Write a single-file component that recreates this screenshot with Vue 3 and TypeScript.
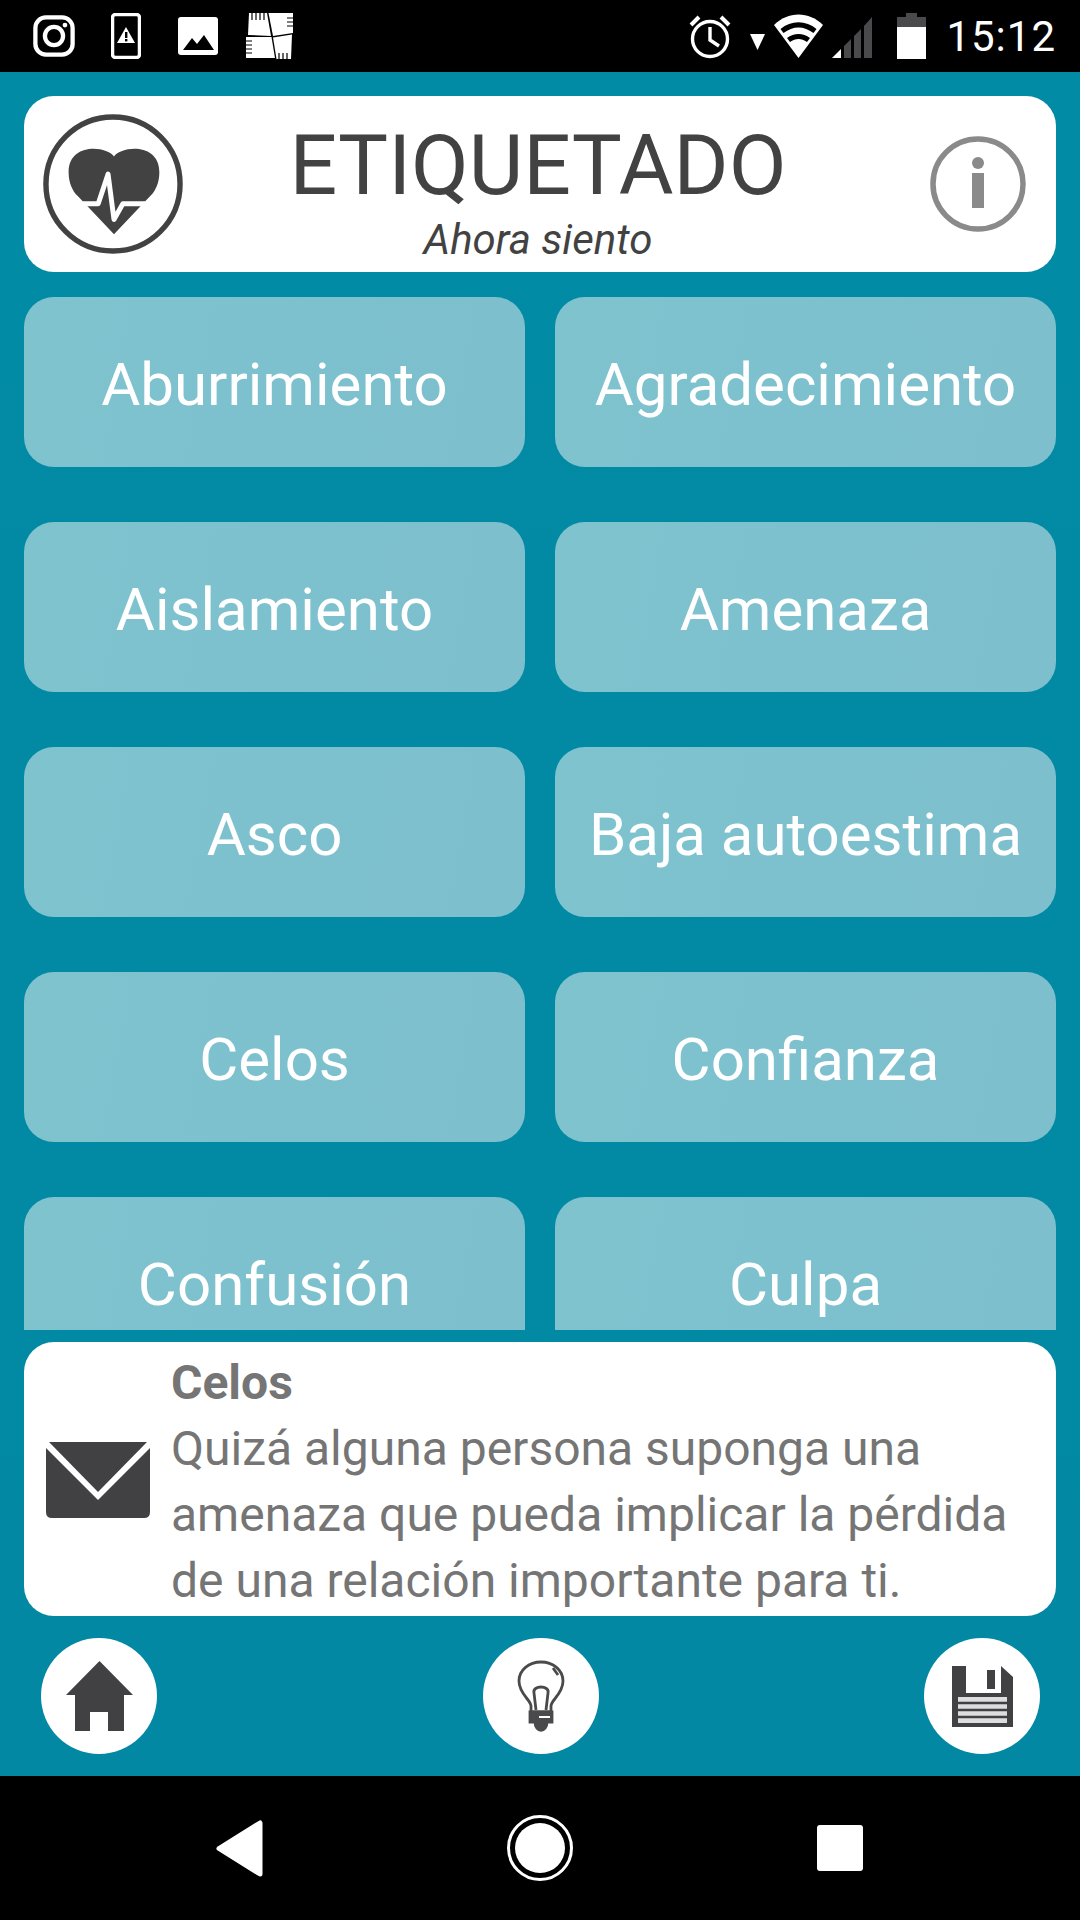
<script setup lang="ts">
const emotions: string[] = [
  'Aburrimiento',
  'Agradecimiento',
  'Aislamiento',
  'Amenaza',
  'Asco',
  'Baja autoestima',
  'Celos',
  'Confianza',
  'Confusión',
  'Culpa',
];
</script>

<template>
  <div class="screen">
    <div class="status-bar">
      <div class="status-left">
        <svg class="st-insta" viewBox="0 0 44 44" fill="none" stroke="#fff" stroke-width="4.5">
          <rect x="2.5" y="2.5" width="39" height="39" rx="11" />
          <circle cx="22" cy="22" r="9.5" />
          <circle cx="33.5" cy="10.5" r="2.5" fill="#fff" stroke="none" />
        </svg>
        <svg class="st-phone" viewBox="0 0 30 46">
          <rect x="1.5" y="1.500" width="27" height="43" rx="3" fill="none" stroke="#fff" stroke-width="3.500" />
          <path d="M15 14 L24 30 H6 Z" fill="#fff" />
          <rect x="14" y="19" width="2.400" height="6" fill="#000" />
          <rect x="14" y="26" width="2.400" height="2.400" fill="#000" />
        </svg>
        <svg class="st-image" viewBox="0 0 40 38">
          <rect x="0" y="0" width="40" height="38" rx="3" fill="#fff" />
          <path d="M5 33 L14 21 L19 27 L26 18 L36 33 Z" fill="#000" />
        </svg>
        <svg class="st-patch" viewBox="0 0 48 46" fill="#fff">
          <path d="M3 0 H21 L25 23 L2 22 Z" />
          <path d="M22.500 0 H47 V20 L27 23 Z" />
          <path d="M0 24 H25.500 L29 45 H0 Z" />
          <path d="M27 24.500 L46 21.500 L45 46 H30.500 Z" />
          <path d="M6 0 V7 M10 0 V7 M14 0 V7 M18 0 V7 M0 28 H6 M0 32 H6 M0 36 H6 M0 40 H6 M33 46 V40 M37 46 V40 M41 46 V40 M48 5 H41 M48 9 H41 M48 13 H41" stroke="#000" stroke-width="1.200" />
        </svg>
      </div>
      <div class="status-right">
        <svg class="st-alarm" viewBox="0 0 44 46" fill="none" stroke="#fff" stroke-width="3.400">
          <circle cx="22" cy="26" r="17.500" />
          <path d="M22 14 V27 L31 33" />
          <path d="M3 12 L11 4 M41 12 L33 4" stroke-width="4" />
        </svg>
        <svg class="st-arrow" viewBox="0 0 15 16"><path d="M0 0 H15 L7.500 16 Z" fill="#fff" /></svg>
        <svg class="st-wifi" viewBox="0 0 49 44">
          <path d="M0 11 C14 -3 35 -3 49 11 L24.500 44 Z" fill="#fff" />
          <path d="M6.500 15 C17 6 32 6 42.500 15 L39.500 19 C30 11.500 19 11.500 9.500 19 Z M13 24 C20 18.500 29 18.500 36 24 L33 28 C27.500 24 21.500 24 16 28 Z" fill="#000" />
        </svg>
        <svg class="st-signal" viewBox="0 0 40 44">
          <path d="M0 44 L9 35 V44 Z" fill="#fff" />
          <path d="M12 32 L19 25 V44 H12 Z M22 22 L29 15 V44 H22 Z M32 12 L40 3 V44 H32 Z" fill="#4a4a4c" />
        </svg>
        <svg class="st-battery" viewBox="0 0 29 46">
          <path d="M9 0 H20 V4 H29 V14 H0 V4 H9 Z" fill="#4a4a4c" />
          <rect x="0" y="14" width="29" height="32" fill="#fff" />
        </svg>
        <span class="st-time">15:12</span>
      </div>
    </div>

    <div class="main">
      <header class="top-card">
        <svg class="heart-icon" viewBox="0 0 144 144">
          <circle cx="72" cy="72" r="68" fill="none" stroke="#424242" stroke-width="5.500" />
          <path d="M73 44 C65 33 27 30 27 60 C27 71 31 79 36 84 L73 123 L110 84 C115 79 119 71 119 60 C119 30 81 33 73 44 Z" fill="#424242" />
          <path d="M22 92 H57 L67 62 L73 108 L82 92 H124" fill="none" stroke="#fff" stroke-width="5" stroke-linejoin="round" />
        </svg>
        <div class="top-titles">
          <h1>ETIQUETADO</h1>
          <p>Ahora siento</p>
        </div>
        <svg class="info-icon" viewBox="0 0 96 96">
          <circle cx="48" cy="48" r="45" fill="none" stroke="#8a8a8a" stroke-width="5.500" />
          <circle cx="48" cy="27" r="6" fill="#8a8a8a" />
          <rect x="42" y="37" width="12" height="35" fill="#8a8a8a" />
        </svg>
      </header>

      <div class="emotion-grid">
        <button v-for="name in emotions" :key="name" class="emotion-btn">{{ name }}</button>
      </div>

      <section class="info-card">
        <svg class="mail-icon" viewBox="0 0 104 76">
          <path d="M3 0 H101 L52 50 Z" fill="#414042" />
          <path d="M0 6 L52 58 L104 6 V70 Q104 76 98 76 H6 Q0 76 0 70 Z" fill="#414042" />
        </svg>
        <div class="info-text">
          <strong>Celos</strong>
          <p>Quizá alguna persona suponga una amenaza que pueda implicar la pérdida de una relación importante para ti.</p>
        </div>
      </section>

      <footer class="actions">
        <div class="round-btn">
          <svg class="home-icon" viewBox="0 0 67 70">
            <path d="M33.500 0 L67 34 H58 V70 H42 V51 H24 V70 H9 V34 H0 Z" fill="#414042" />
          </svg>
        </div>
        <div class="round-btn">
          <svg class="bulb-icon" viewBox="0 0 48 72" fill="none" stroke="#4a4a4c" stroke-width="2.800">
            <path d="M14 52 V46 C14 40 2 34 2 21 C2 10 12 2 24 2 C36 2 46 10 46 21 C46 34 34 40 34 46 V52 Z" />
            <path d="M19 50 L17 33 C15 25 33 25 31 33 L29 50" />
            <path d="M36 8 L41 15" />
            <path d="M13 52 H35 V62 H13 Z" fill="#4a4a4c" />
            <path d="M18 62 C18 73 30 73 30 62" fill="#4a4a4c" />
            <path d="M22 57 H33" stroke="#fff" stroke-width="2" />
          </svg>
        </div>
        <div class="round-btn">
          <svg class="save-icon" viewBox="0 0 61 61">
            <path d="M0 0 H49 L61 11 V61 H0 Z" fill="#414042" />
            <rect x="14" y="0" width="35" height="27" fill="#fff" />
            <rect x="35" y="4" width="8" height="19" fill="#414042" />
            <rect x="6" y="31" width="49" height="26" fill="#ddd" />
            <path d="M6 37 H55 M6 44 H55 M6 51 H55" stroke="#414042" stroke-width="2.500" />
          </svg>
        </div>
      </footer>
    </div>

    <nav class="nav-bar">
      <svg class="nav-back" viewBox="0 0 50 59">
        <path d="M45 4 V55 L4 29.500 Z" fill="#fff" stroke="#fff" stroke-width="5" stroke-linejoin="round" />
      </svg>
      <svg class="nav-home" viewBox="0 0 66 66">
        <circle cx="33" cy="33" r="31.500" fill="none" stroke="#fff" stroke-width="3" />
        <circle cx="33" cy="33" r="25" fill="#fff" />
      </svg>
      <div class="nav-square"></div>
    </nav>
  </div>
</template>

<style scoped>
.screen {
  width: 1080px;
  height: 1920px;
  display: flex;
  flex-direction: column;
  overflow: hidden;
  font-family: Roboto, "Liberation Sans", sans-serif;
  background: #000;
}

/* barra de estado */
.status-bar {
  height: 72px;
  flex: none;
  display: flex;
  align-items: center;
  justify-content: space-between;
  padding: 0 24px 0 33px;
}

.status-left,
.status-right {
  display: flex;
  align-items: center;
}

.st-insta { width: 42px; height: 42px; }
.st-phone { width: 30px; height: 46px; margin-left: 36px; }
.st-image { width: 40px; height: 38px; margin-left: 37px; }
.st-patch { width: 48px; height: 46px; margin-left: 28px; }
.st-alarm { width: 44px; height: 46px; }
.st-arrow { width: 15px; height: 16px; margin-left: 18px; margin-top: 12px; }
.st-wifi { width: 49px; height: 44px; margin-left: 9px; }
.st-signal { width: 40px; height: 44px; margin-left: 9px; }
.st-battery { width: 29px; height: 46px; margin-left: 25px; }

.st-time {
  margin-left: 20px;
  font-size: 42px;
  color: #fff;
  letter-spacing: 1px;
}

/* contenido */
.main {
  flex: 1;
  min-height: 0;
  display: flex;
  flex-direction: column;
  padding: 24px 24px 0;
  background: linear-gradient(#028ba5, #0288a3);
}

.top-card {
  flex: none;
  height: 176px;
  display: grid;
  grid-template-columns: 1fr auto 1fr;
  align-items: center;
  padding: 0 30px 0 18px;
  background: #fff;
  border-radius: 30px;
}

.heart-icon {
  width: 142px;
  height: 142px;
  filter: blur(0.6px);
}

.info-icon {
  width: 96px;
  height: 96px;
  justify-self: end;
  filter: blur(0.6px);
}

.top-titles {
  text-align: center;
  color: #424242;
  padding-top: 15px;
  margin-left: 8px;
}

.top-titles h1 {
  margin: 0;
  font-size: 84px;
  font-weight: 400;
  line-height: 96px;
}

.top-titles p {
  margin: 0;
  font-size: 42px;
  font-style: italic;
  line-height: 52px;
}

.emotion-grid {
  flex: none;
  height: 1033px;
  margin-top: 25px;
  display: grid;
  grid-template-columns: 501px 501px;
  grid-auto-rows: 170px;
  column-gap: 30px;
  row-gap: 55px;
  overflow: hidden;
}

.emotion-btn {
  border: none;
  padding: 4px 0 0;
  border-radius: 30px;
  background: linear-gradient(100deg, #7fc3cf, #7dbfcd);
  color: #fff;
  font-family: inherit;
  font-size: 60px;
}

.info-card {
  flex: none;
  height: 274px;
  margin-top: 12px;
  display: flex;
  align-items: center;
  padding: 0 10px 0 22px;
  background: #fff;
  border-radius: 30px;
}

.mail-icon {
  flex: none;
  width: 104px;
  height: 76px;
  margin-top: 2px;
  margin-right: 21px;
  filter: blur(0.5px);
}

.info-text {
  margin-top: 5px;
  color: #757575;
  font-size: 48px;
  line-height: 66px;
}

.info-text strong {
  display: block;
}

.info-text p {
  margin: 0;
}

.actions {
  flex: 1;
  display: flex;
  align-items: center;
  justify-content: space-between;
  padding: 0 16px 0 17px;
}

.round-btn {
  width: 116px;
  height: 116px;
  display: flex;
  align-items: center;
  justify-content: center;
  background: #fff;
  border-radius: 50%;
}

.home-icon { width: 67px; height: 70px; }
.bulb-icon { width: 48px; height: 72px; }
.save-icon { width: 61px; height: 61px; }

/* barra de navegación */
.nav-bar {
  height: 144px;
  flex: none;
  display: flex;
  align-items: center;
  padding-left: 215px;
}

.nav-back { width: 50px; height: 59px; }
.nav-home { width: 66px; height: 66px; margin-left: 242px; }

.nav-square {
  width: 46px;
  height: 46px;
  margin-left: 244px;
  background: #fff;
  border-radius: 3px;
}
</style>
